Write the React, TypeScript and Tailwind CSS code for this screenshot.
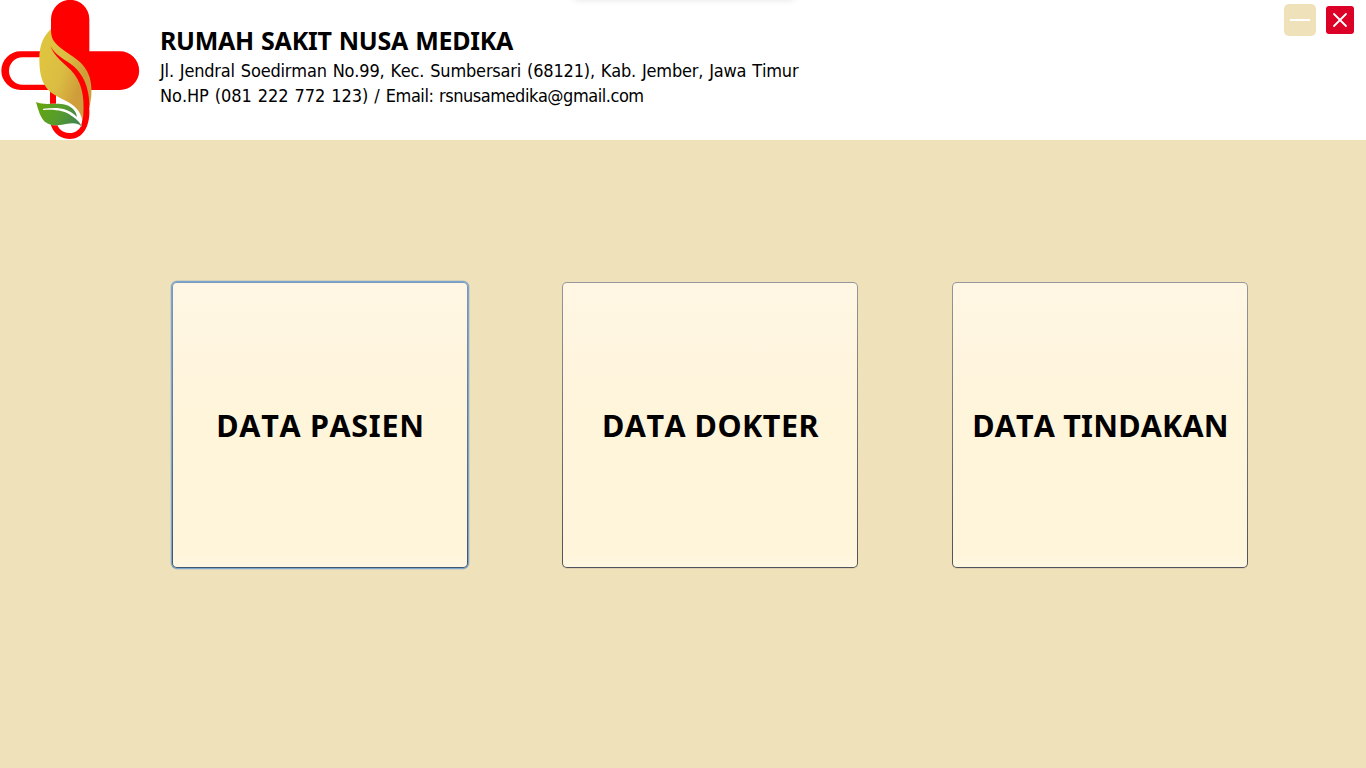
function Logo() {
  return (
    <svg viewBox="0 0 426 426" className="size-[142px] shrink-0" aria-hidden="true">
      <defs>
        <linearGradient id="gold" x1="0.1" y1="0.25" x2="0.95" y2="0.8">
          <stop offset="0" stopColor="#dfc440" />
          <stop offset="0.4" stopColor="#dbbc42" />
          <stop offset="0.75" stopColor="#cf9d3a" />
          <stop offset="1" stopColor="#cda040" />
        </linearGradient>
        <linearGradient id="green" x1="0" y1="0" x2="1" y2="0.3">
          <stop offset="0" stopColor="#67a60c" />
          <stop offset="0.6" stopColor="#569c2c" />
          <stop offset="1" stopColor="#43874a" />
        </linearGradient>
      </defs>
      <path d="M153 57a57.500 57.500 0 0 1 115 0V154H360a57.500 58 0 0 1 0 116H240L153 140Z" fill="#f00" />
      <path fillRule="evenodd" d="M62 154H150V270H62a58 58 0 0 1 0-116ZM67 172a40 41 0 0 0 0 82H150V172Z" fill="#f00" />
      <path d="M150 265H168V350C168 383 184 399 210 399C240 399 253 370 251 330H268C270 380 248 417 209 417C175 417 150 390 150 355Z" fill="#f00" />
      <path d="M153 87C128 110 118 139 118 176C118 222 125 251 151 276C176 296 210 303 230 326C242 341 246 352 249 370L267 325C276 295 277 264 269 232C253 178 205 167 171 134C158 121 153 112 153 87Z" fill="url(#gold)" />
      <path d="M151 138C163 170 190 187 213 211C244 244 254 286 250 345C249 353 247 364 244 374L256 379C265 362 268 340 268 312C267 262 249 223 221 199C195 178 168 168 151 138Z" fill="#f00" />
      <path d="M108 306C136 318 168 306 196 314C217 320 229 334 231 351L246 380C225 362 204 373 174 376C126 378 120 346 108 306Z" fill="#fff" />
      <path d="M108 306C136 318 168 306 196 314C217 320 229 334 231 351C205 322 170 321 130 326Q126 329 133 330C165 327 196 333 214 347C230 357 239 366 246 380C225 362 204 373 174 376C126 378 120 346 108 306Z" fill="url(#green)" />
    </svg>
  );
}

function MenuCard({ label, tracking, focused = false }: { label: string; tracking: string; focused?: boolean }) {
  const frame = focused
    ? "from-[#7a9bbc] to-[#3f5670] shadow-[0_0_0_1px_#7ba6d0,0_0_0_1.5px_#b5bfb9]"
    : "from-[#96969c] to-[#50535b] shadow-[0_1px_0_#dccfae]";
  return (
    <button className={`h-[286px] w-[296px] rounded-[5px] bg-linear-to-b p-px ${frame}`}>
      <span className="flex h-full w-full items-center justify-center rounded-[4px] bg-[linear-gradient(#fff7e4_0%,#fff5df_25%,#fff5da_50%,#fff5da_95%,#fff7e2_100%)] pl-px">
        <span className={`text-[30.5px] leading-9 font-bold whitespace-nowrap ${tracking}`}>{label}</span>
      </span>
    </button>
  );
}

export default function App() {
  return (
    <div className="flex h-screen w-full flex-col overflow-hidden bg-[#efe1ba] font-['Noto_Sans',sans-serif] text-black [font-kerning:none]">
      <header className="relative flex h-[140px] shrink-0 bg-white">
        <div className="absolute -top-2 left-[574px] h-2 w-[220px] shadow-[0_0_7px_rgba(0,0,0,0.11)]" />
        <Logo />
        <div className="flex flex-1 flex-col pt-[23px] pl-[18px] whitespace-nowrap">
          <h1 className="flex h-[35px] text-[25px] leading-[34px] font-bold tracking-[-0.28px] [word-spacing:1px]"><span>RUMAH SAKIT NUSA MEDIKA</span></h1>
          <p className="h-[25px] font-['DejaVu_Sans_Condensed','DejaVu_Sans',sans-serif] text-[18px] leading-[25px] tracking-[-0.18px] [font-stretch:condensed] [word-spacing:0.95px]"><span>Jl. Jendral Soedirman No.99, Kec. Sumbersari (68121), Kab. Jember, Jawa Timur</span></p>
          <p className="h-[25px] font-['DejaVu_Sans_Condensed','DejaVu_Sans',sans-serif] text-[18px] leading-[25px] [font-stretch:condensed] [word-spacing:0.95px]">
            <span className="tracking-[-0.06px]">No.HP (081 222 772 123) / </span>
            <span className="tracking-[-0.46px]">Email: rsnusamedika@gmail.com</span>
          </p>
        </div>
        <div className="flex items-start gap-[10px] pt-1 pr-3">
          <button aria-label="Minimize" className="flex size-8 items-center justify-center rounded-[5px] bg-[#efe1ba]">
            <span className="h-[2px] w-5 bg-white" />
          </button>
          <button aria-label="Close" className="mt-[2px] flex size-7 items-center justify-center rounded-[3px] bg-[#dc0028]">
            <svg viewBox="0 0 14 14" className="size-[14px]" stroke="#fff" strokeWidth="1.8" strokeLinecap="round">
              <path d="M1 1L13 13M13 1L1 13" />
            </svg>
          </button>
        </div>
      </header>
      <main className="flex flex-1 gap-[94px] pt-[142px] pl-[172px]">
        <MenuCard label="DATA PASIEN" tracking="tracking-[0.7px]" focused />
        <MenuCard label="DATA DOKTER" tracking="tracking-[0.5px]" />
        <MenuCard label="DATA TINDAKAN" tracking="tracking-[0.2px]" />
      </main>
    </div>
  );
}
